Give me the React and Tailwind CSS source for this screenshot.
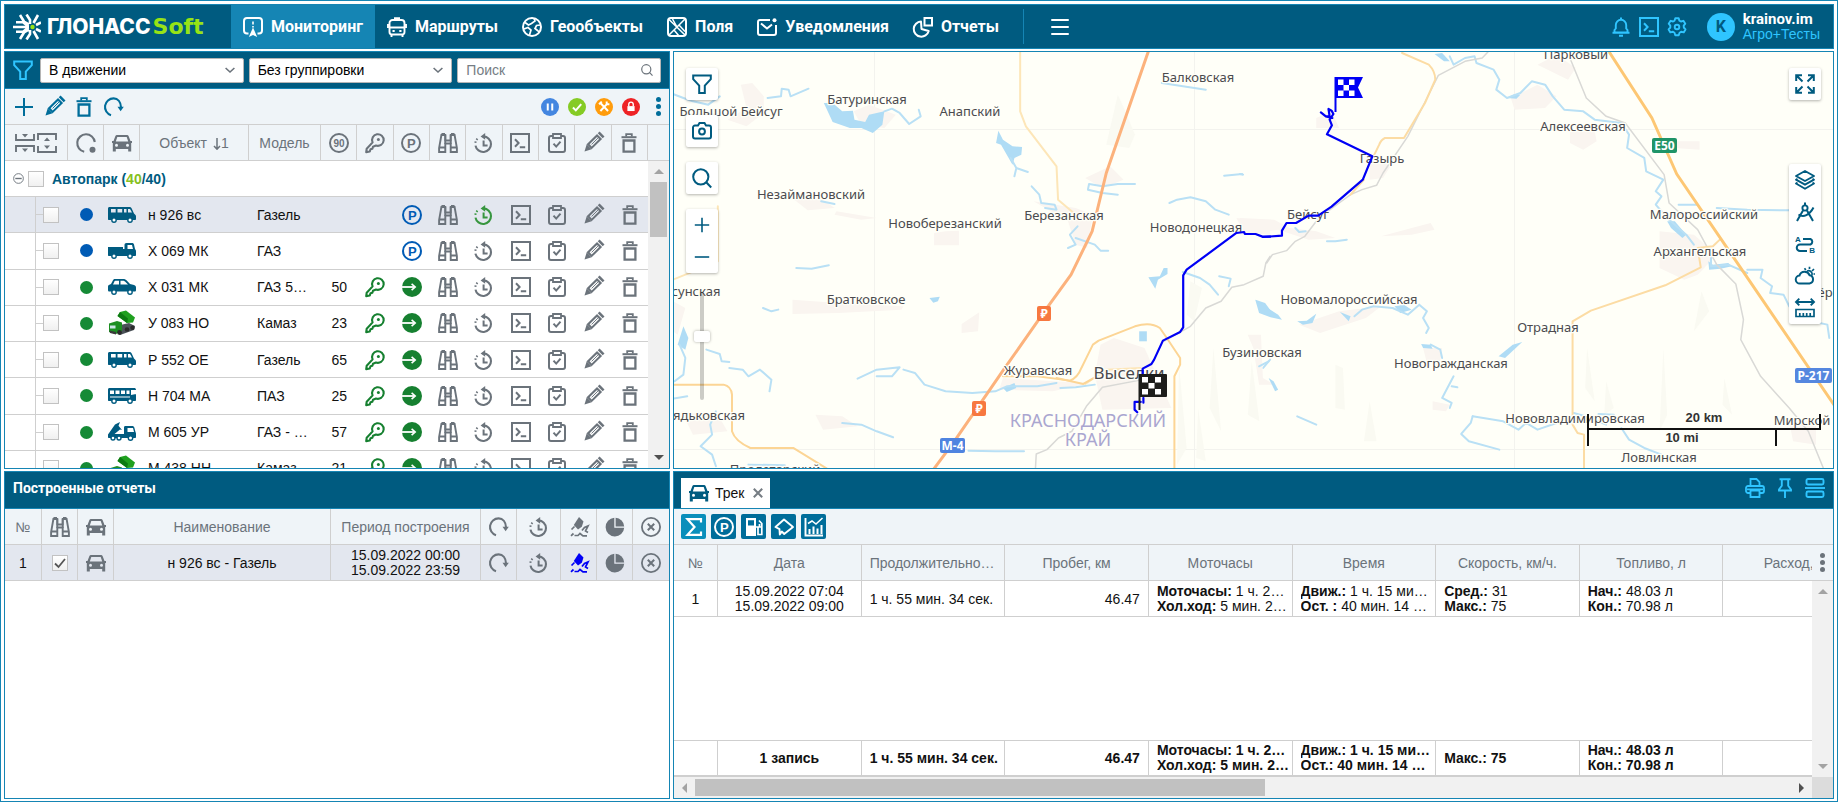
import React from 'react';

/* ---------- icons, all on a 20 x 20 grid ---------- */

const SHAPES = {
  filter: <path d="M1.2 1.5h17.6v3.6l-6 6.6V19H7.2v-7.3L1.2 5.1z" strokeWidth="2" />,
  plus: <path d="M10 1v18M1 10h18" strokeWidth="2" />,
  minus: <path d="M1 10h18" strokeWidth="2" />,
  pencil: (
    <g transform="rotate(45 10 10)">
      <path d="M7.5 1.8h5v12.6h-5z" strokeWidth="2.1" />
      <path d="M10 3v9" strokeWidth="0.9" />
      <path d="M6.5 15.4h7L10 22z" fill="currentColor" stroke="none" />
      <path d="M6.5 -2.8h7V-.2h-7z" fill="currentColor" stroke="none" />
    </g>
  ),
  trash: (
    <>
      <path d="M4.6 7.5h10.8v11.2H4.6z" strokeWidth="2.3" />
      <path d="M2.5 4.2h15" strokeWidth="2" />
      <path d="M7.2 3.6V1.2h5.6v2.4" strokeWidth="1.8" />
    </>
  ),
  redo: (
    <>
      <path d="M7 18.2A8.6 8.6 0 0 1 9.6 1.4c4.3 0 7.2 3.6 7.4 8.8" strokeWidth="2.1" />
      <path d="M13.500 9.800h6.300l-3.200 4.400z" fill="currentColor" stroke="none" />
    </>
  ),
  ring: (
    <>
      <path d="M8.2 18.7A8.8 8.8 0 1 1 18.8 9" strokeWidth="2.1" />
      <circle cx="16.5" cy="16.8" r="3" fill="currentColor" stroke="none" />
    </>
  ),
  car: (
    <path
      fillRule="evenodd"
      fill="currentColor"
      stroke="none"
      d="M5 2h10a2 2 0 0 1 1.700 1.200L18.500 8H20v2h-.8v8.500h-3V16H3.800v2.500h-3V10H0V8h1.500l1.800-4.800A2 2 0 0 1 5 2zm.3 2L3.800 8.500h12.400L14.700 4zM4.500 10.800a1.500 1.500 0 1 0 0 3 1.500 1.500 0 0 0 0-3zm11 0a1.500 1.500 0 1 0 0 3 1.500 1.500 0 0 0 0-3z"
    />
  ),
  speed: (
    <>
      <circle cx="10" cy="10" r="9" strokeWidth="2" />
      <text x="10" y="13.6" textAnchor="middle" fontSize="10" fontWeight="700" fontFamily="Liberation Sans, sans-serif" fill="currentColor" stroke="none">90</text>
    </>
  ),
  key: (
    <>
      <path d="M7.600 9.400A5.800 5.800 0 1 1 11 12.500l-3 1.300-.6 1.900-1.900.5-.7 2.300-3.600.6.5-3.400z" strokeWidth="2.1" strokeLinejoin="round" />
      <circle cx="13.400" cy="6.500" r="1.500" fill="currentColor" stroke="none" />
    </>
  ),
  parking: (
    <>
      <circle cx="10" cy="10" r="9" strokeWidth="2" />
      <text x="10.4" y="14.6" textAnchor="middle" fontSize="13" fontWeight="700" fontFamily="Liberation Sans, sans-serif" fill="currentColor" stroke="none">P</text>
    </>
  ),
  go: (
    <>
      <circle cx="10" cy="10" r="10" fill="currentColor" stroke="none" />
      <path d="M0 10h12" stroke="#fff" strokeWidth="1.800" />
      <path d="M9.600 6.800 13.200 10l-3.600 3.200" stroke="#fff" strokeWidth="1.600" />
    </>
  ),
  binoculars: (
    <>
      <path d="M3.4 2h3.9v5.500h5.400V2h3.900l2.300 13v4h-6.200v-8.500H7.300V19H1.100v-4z" strokeWidth="1.900" />
      <path d="M7.300 2v9M12.700 2v9M1 14.500h6.300M12.700 14.500H19M3.500 1h3.500M13 1h3.500" strokeWidth="1.800" />
    </>
  ),
  history: (
    <>
      <path d="M9.500 3.400a7.800 7.800 0 1 1-8 9.200" strokeWidth="2.100" />
      <path d="M11.200 0v6.800L6.600 3.400z" fill="currentColor" stroke="none" />
      <path d="M1.400 9.900l.2-1.500M2.500 6.800l.9-1.200" strokeWidth="2" />
      <path d="M9.600 7.500v5h4" strokeWidth="2" />
    </>
  ),
  terminal: (
    <>
      <path d="M1 1h18v18H1z" strokeWidth="2" />
      <path d="M5 6.200 8.600 10 5 13.800M9.800 14.200h5.400" strokeWidth="2" />
    </>
  ),
  clipboard: (
    <>
      <path d="M6 3H4a2 2 0 0 0-2 2v12a2 2 0 0 0 2 2h12a2 2 0 0 0 2-2V5a2 2 0 0 0-2-2h-2" strokeWidth="2" />
      <path d="M6 1h8v4H6z" strokeWidth="1.800" />
      <path d="m6.500 10.600 2.700 3 4.300-5" strokeWidth="2" />
    </>
  ),
  collapse: (
    <>
      <path d="M1 1v6h18V1M1 19v-6h18v6" strokeWidth="1.900" />
      <path d="M7 1h6l-3 3.500zM7 15.500h6L10 19z" fill="currentColor" stroke="none" />
    </>
  ),
  expand: (
    <>
      <path d="M1 7V1h18v6M1 13v6h18v-6" strokeWidth="1.900" />
      <path d="M7 8h6l-3-3.500zM7 12.500h6L10 16z" fill="currentColor" stroke="none" />
    </>
  ),
  brush: (
    <>
      <path d="m10 0 4.500 4.500-1.700 5.300L9 12.500 4.800 8z" fill="currentColor" stroke="none" />
      <path d="m5.500 9.500-3 3M4.500 16.500 2 18.800M5.500 18.500h3.500l2-2 3 2.300h4M13 13.500l2.500-3 3.500-1.500-2.500 5 2.500 1.500" strokeWidth="1.700" />
    </>
  ),
  pie: (
    <>
      <path d="M9.300.8a9.300 9.300 0 1 0 9.900 9.900H9.300z" fill="currentColor" stroke="none" />
      <path d="M10.600.8a9 9 0 0 1 8.600 8.600h-8.600z" fill="currentColor" stroke="none" />
    </>
  ),
  close: (
    <>
      <circle cx="10" cy="10" r="9.100" strokeWidth="1.800" />
      <path d="m6.800 6.800 6.400 6.400M13.200 6.800l-6.400 6.400" strokeWidth="2" />
    </>
  ),
  cross: <path d="m3 3 14 14M17 3 3 17" strokeWidth="3.400" />,
  monitoring: (
    <>
      <path d="M5.500 16.500H4a3 3 0 0 1-3-3V4a3 3 0 0 1 3-3h12a3 3 0 0 1 3 3v9.500a3 3 0 0 1-3 3h-1.500" strokeWidth="2" />
      <path d="M10 4.500v3M10 9v1.500" strokeWidth="1.600" />
      <path d="m10 10.500 4.200 9.500-4.200-2-4.200 2z" fill="currentColor" stroke="none" />
    </>
  ),
  bus: (
    <>
      <path d="M5.500 3h9a3 3 0 0 1 3 3v9a2.500 2.500 0 0 1-2.500 2.500H5A2.500 2.500 0 0 1 2.500 15V6a3 3 0 0 1 3-3z" strokeWidth="1.900" />
      <path d="M7 1.200h6M3 10.500h14M1 7v4M19 7v4M4.500 17.500V20M15.500 17.500V20" strokeWidth="1.900" />
      <path d="M5.500 13.900h2.200M12.300 13.900h2.200" strokeWidth="2" />
    </>
  ),
  globe: (
    <>
      <circle cx="10" cy="10" r="9" strokeWidth="2" />
      <path d="M3 5.500 6.500 8l3-1.500L13 4l-1-2.500M2 12l4-1.500 3 2.500-1.500 5M18.500 8l-4 .5-1.500 3 2.500 2 1.500 1.500" strokeWidth="1.700" />
    </>
  ),
  field: (
    <>
      <rect x="1" y="1" width="18" height="18" rx="3" strokeWidth="2" />
      <path d="M2 2.500 18 18M18 2 2 18M10 10l-4.500-8M7 13l5 6M12 8l6 6.500" strokeWidth="1.500" />
    </>
  ),
  mail: (
    <>
      <path d="M13 3H3a2 2 0 0 0-2 2v11a2 2 0 0 0 2 2h14a2 2 0 0 0 2-2V8" strokeWidth="2" />
      <path d="m4 6.500 6 5 5-4" strokeWidth="2" />
      <circle cx="17.500" cy="3.300" r="2" fill="currentColor" stroke="none" />
    </>
  ),
  report: (
    <>
      <path d="M8 4.500A7.600 7.600 0 1 0 15.700 14L8.500 12z" strokeWidth="2" strokeLinejoin="round" />
      <path d="M11.500 1H19v7.500h-7.500z" strokeWidth="2" />
    </>
  ),
  bell: (
    <>
      <path d="M3.500 15.500V13l1.300-1.500V8a5.200 5.200 0 0 1 10.400 0v3.500L16.500 13v2.500zM1.500 15.700h17" strokeWidth="1.900" />
      <path d="M10 .5v2M8 18.700h4" strokeWidth="2" />
    </>
  ),
  gear: (
    <>
      <path d="m8.300 1.200 3.400 0 .7 2.500 1.500.8 2.500-.7 1.900 2.900-1.600 2 .1 1.800 1.700 1.900-1.800 3-2.600-.6-1.500.9-.9 2.600H8.300l-.8-2.600-1.500-.9-2.600.6-1.800-3 1.700-1.900V8.700l-1.600-2 1.900-2.900 2.500.7 1.400-.8z" strokeWidth="1.900" strokeLinejoin="round" />
      <circle cx="10" cy="10" r="2.300" strokeWidth="1.900" />
    </>
  ),
  camera: (
    <>
      <path d="M3 4.500h3L7.500 2h5L14 4.500h3a2 2 0 0 1 2 2v9a2 2 0 0 1-2 2H3a2 2 0 0 1-2-2v-9a2 2 0 0 1 2-2z" strokeWidth="2" />
      <circle cx="10" cy="10.500" r="2.900" strokeWidth="2" />
    </>
  ),
  search: (
    <>
      <circle cx="8.800" cy="8.800" r="7.600" strokeWidth="2" />
      <path d="m14 14 5.200 5.500" strokeWidth="2" />
    </>
  ),
  fullscreen: (
    <path d="M1.200 7V1.200H7M13 1.200h5.800V7M18.800 13v5.800H13M7 18.800H1.200V13M2 2l5.500 5.500M18 2l-5.500 5.500M2 18l5.500-5.500M18 18l-5.500-5.500" strokeWidth="2" />
  ),
  layers: (
    <path d="m10 1 9 5-9 5-9-5zM2.500 8.800 1 9.700l9 5 9-5-1.500-.9M2.500 12.600 1 13.500l9 5.200 9-5.200-1.500-.9" strokeWidth="1.900" strokeLinejoin="round" />
  ),
  compass: (
    <>
      <path d="M10 .5v3M8 8.500 2 19M12 8.500 18 19M3.500 12.500c5 3.500 11 .5 15-7" strokeWidth="2" />
      <circle cx="10" cy="6" r="2.600" strokeWidth="1.900" />
    </>
  ),
  route: (
    <>
      <path d="M8 5h7.500a3 3 0 0 1 0 5.500H5A3.200 3.200 0 0 0 5 17h7" strokeWidth="2" />
      <text x="0" y="7.500" fontSize="8" fontWeight="700" fontFamily="Liberation Sans, sans-serif" fill="currentColor" stroke="none">A</text>
      <text x="14.200" y="18.600" fontSize="8" fontWeight="700" fontFamily="Liberation Sans, sans-serif" fill="currentColor" stroke="none">B</text>
    </>
  ),
  weather: (
    <>
      <path d="M5 17.500a4 4 0 0 1-.5-8 5.300 5.300 0 0 1 10-.3A4.200 4.200 0 0 1 14.500 17.500z" strokeWidth="2" />
      <path d="M12 5.200a3.500 3.500 0 0 1 5 4.200M14.500 3V.8M17 5l2-2M18.500 8h1.500M10.800 4 9.500 2.300" strokeWidth="1.700" />
    </>
  ),
  ruler: (
    <>
      <path d="M1 4h18M4.300.7 1 4l3.300 3.300M15.700.7 19 4l-3.300 3.300" strokeWidth="1.900" />
      <path d="M1 11.500h18v7H1zM4.800 18v-3M8.300 18v-3M11.700 18v-3M15.200 18v-3" strokeWidth="1.700" />
    </>
  ),
  printer: (
    <>
      <path d="M5.500 8V1h6L14.500 4v4M5.500 15H3a2 2 0 0 1-2-2v-3a2 2 0 0 1 2-2h14a2 2 0 0 1 2 2v3a2 2 0 0 1-2 2h-2.500" strokeWidth="1.800" />
      <path d="M5.500 12.500h9V19h-9zM2 11.300h16" strokeWidth="1.800" />
    </>
  ),
  pin: <path d="M4.500 1.200h11M6.800 1.500v6.300L4 11.500v1h12v-1l-2.800-3.700V1.500M10 12.500V20" strokeWidth="1.900" />,
  split: (
    <>
      <rect x="1.500" y="1" width="17" height="5.500" rx="1.500" strokeWidth="1.900" />
      <path d="M0 10h20" strokeWidth="1.900" />
      <rect x="1.500" y="13.500" width="17" height="5.500" rx="1.500" strokeWidth="1.900" />
    </>
  ),
  sum: <path d="M17 5.500V2.200H3.500L10.500 10l-7 7.800H17v-3.300" strokeWidth="2.200" />,
  fuel: (
    <>
      <path fillRule="evenodd" d="M2 1h10v18H2zm2 2.200v5.300h6V3.200z" fill="currentColor" stroke="none" />
      <path d="M12 10h2v7.500h3.800V6.500L15 3.500M15.500 7v3h2.300" strokeWidth="1.700" />
    </>
  ),
  hand: <path d="m5.800 17.500 2-3 2.400 2.500L19 10l-9-7.500L1.500 10l4 2.200z" strokeWidth="1.900" strokeLinejoin="round" />,
  chart: (
    <>
      <path d="M1.500 1v17.500H19" strokeWidth="1.900" />
      <path d="M5.500 17v-5M9.500 17V9.500M13.500 17v-5.500M17.500 17V8" strokeWidth="2" />
      <path d="m4 6.500 4-2.500 4 3L18.500 1" strokeWidth="1.500" />
    </>
  ),
  chevron: <path d="m4.500 7.500 5.500 5 5.500-5" strokeWidth="2" />,
};

function Icon({ name, className = 'size-5' }) {
  return (
    <svg viewBox="0 0 20 20" fill="none" stroke="currentColor" aria-hidden="true" className={`block shrink-0 overflow-visible ${className}`}>
      {SHAPES[name]}
    </svg>
  );
}

function IconButton({ name, label, className = '' }) {
  return (
    <button type="button" aria-label={label} className={`flex cursor-pointer items-center justify-center ${className}`}>
      <Icon name={name} />
    </button>
  );
}

/* ---------- vehicles, 28 x 16 ---------- */

const WHEELS = (
  <>
    <circle cx="6" cy="13" r="2.200" fill="#fff" stroke="currentColor" strokeWidth="1.400" />
    <circle cx="22" cy="13" r="2.200" fill="#fff" stroke="currentColor" strokeWidth="1.400" />
  </>
);

const VEHICLES = {
  van: (
    <>
      <path fillRule="evenodd" fill="currentColor" d="M1.500 0h19.500c1.500 0 2 .4 2.700 1.500L26 6.500l1.500 1.500c.4.400.5 1 .5 1.500V12c0 .7-.5 1-1 1H1c-.7 0-1-.400-1-1V1.500C0 .6.600 0 1.500 0zM3 2v3.500h4.700V2zm6.500 0v3.500h4.700V2zm6.500 0v3.500h2.500V2zm4 0v3.500h4L22 2z" />
      {WHEELS}
    </>
  ),
  pickup: (
    <>
      <path fillRule="evenodd" fill="currentColor" d="M0 4h15v2h1.500V2c0-1.300.7-2 2-2H24c1.200 0 1.700.5 2 1.500L27 6l.7 1c.3.500.3 1 .3 1.500V12c0 .7-.5 1-1 1H1c-.7 0-1-.400-1-1zM19.500 2v4H25l-1-4z" />
      {WHEELS}
    </>
  ),
  car: (
    <>
      <path fillRule="evenodd" fill="currentColor" d="M3 5 5 1.300C5.500.4 6 0 7 0h8c1.500 0 2.500.4 3.500 1.300L22 5l4 1c1.500.4 2 1.300 2 2.500V11c0 1-.5 1.500-1.500 1.500h-25C.5 12.500 0 12 0 11V7.500C0 6 1.500 5.500 3 5zm3-1.500L5 5.500h6V1.800H7.300C6.600 1.800 6.300 2.800 6 3.500zm6.500-1.700v3.700H20l-3-2.900c-.7-.6-1-.8-2-.8z" />
      {WHEELS}
    </>
  ),
  bus: (
    <>
      <path fillRule="evenodd" fill="currentColor" d="M1.500 0H26c1.300 0 2 .6 2 2v10c0 .7-.5 1-1 1H1c-.7 0-1-.400-1-1V1.500C0 .6.600 0 1.500 0zM2 2.500V6h4V2.500zm5.500 0V6h4V2.500zm5.500 0V6h4V2.500zm5.500 0V6h3V2.500zm4.500-.5V7l5-1V2zM2 8.500v1h20v-1z" />
      {WHEELS}
    </>
  ),
  crane: (
    <>
      <path fill="currentColor" d="M7 .5 12 -2l-1.500 3.800L14 6l-2-.5L6.500 10H16V3.500c0-1 .5-1.500 1.500-1.500H24c1.300 0 2 .5 2.300 1.500L27.500 8c.3.500.5 1 .5 1.500V13c0 .7-.5 1-1 1H1c-.7 0-1-.400-1-1v-2.500z" />
      <path fill="#fff" d="M19.500 4H25l1 4h-6.500z" />
      <circle cx="5" cy="14" r="2" fill="#fff" stroke="currentColor" strokeWidth="1.400" />
      <circle cx="11" cy="14" r="2" fill="#fff" stroke="currentColor" strokeWidth="1.400" />
      <circle cx="22.500" cy="14" r="2.200" fill="#fff" stroke="currentColor" strokeWidth="1.400" />
    </>
  ),
  dump: (
    <>
      <path d="M8 11 21 8l6 3-1 4-14 5z" fill="#4b5258" />
      <path d="M12 -3 18 -4.500 27 2.500 25 7.500 19 8 9.500 1z" fill="#1fa01f" />
      <path d="M9.500 1 12 -3l8 6.500L19 8z" fill="#0d7a12" />
      <path d="M1 8.500 9 6l5 1.500V16l-6 3-7-2z" fill="#1d8f22" />
      <path d="M2 10.500h5.500v3H2z" fill="#cfe6ea" />
      <path d="M1.500 15.500 8 17v2.500L2 18z" fill="#3a3a3a" />
      <circle cx="11.500" cy="17.500" r="2.400" fill="#2b2b2b" />
      <circle cx="19" cy="14.500" r="2.300" fill="#2b2b2b" />
      <circle cx="24.500" cy="12.800" r="2.200" fill="#2b2b2b" />
    </>
  ),
};

function Vehicle({ kind }) {
  return (
    <svg viewBox="0 0 28 16" aria-hidden="true" className="h-4 w-7 overflow-visible text-[#005b80]">
      {VEHICLES[kind]}
    </svg>
  );
}

/* ---------- header ---------- */

const NAV = [
  ['monitoring', 'Мониторинг'],
  ['bus', 'Маршруты'],
  ['globe', 'Геообъекты'],
  ['field', 'Поля'],
  ['mail', 'Уведомления'],
  ['report', 'Отчеты'],
];

function Logo() {
  return (
    <a href="#home" className="flex w-[226px] shrink-0 items-center gap-1.5 pl-2 text-white">
      <svg viewBox="0 0 28 26" className="h-[26px] w-7" fill="none" stroke="#fff" strokeWidth="2.600" aria-hidden="true">
        <path d="M0 13h16M3 8.300h7l5.500 4.200M3 17.700h7l5.500-4.200" />
        <path d="m7 1 4 6.500 5 3M7 25l4-6.500 5-3M13.500.5 17 6v4M13.500 25.500 17 20v-4M25 1l-4.500 8M25 25l-4.500-8M28 8.500 23 11M28 17.500 23 15" />
        <circle cx="19.500" cy="13" r="2.200" fill="#97e316" stroke="none" />
      </svg>
      <span className="flex items-baseline gap-0.5 text-[22px] leading-6 font-bold whitespace-nowrap">
        <span className="font-['Inter',sans-serif] text-[21px] font-extrabold">ГЛОНАСС</span>
        <span className="font-['DejaVu_Sans',sans-serif] text-[#97e316]">Soft</span>
      </span>
    </a>
  );
}

function TopBar() {
  return (
    <header className="flex h-[45px] shrink-0 border border-[#1585b4] bg-[#005b80] text-white">
      <Logo />
      <nav className="flex">
        {NAV.map(([icon, label], i) => (
          <a
            key={label}
            href={`#${icon}`}
            className={`flex items-center gap-2 px-3 font-['Roboto',sans-serif] text-base font-bold ${i === 0 ? 'bg-[#1585b4]' : ''}`}
          >
            <Icon name={icon} />
            {label}
          </a>
        ))}
      </nav>
      <div className="my-1 ml-3 w-px bg-[#1585b4]" />
      <button type="button" aria-label="Меню" className="ml-6 flex w-6 cursor-pointer flex-col items-center justify-center gap-[5px]">
        <span className="h-0.5 w-[18px] rounded bg-white" />
        <span className="h-0.5 w-[18px] rounded bg-white" />
        <span className="h-0.5 w-[18px] rounded bg-white" />
      </button>
      <div className="ml-auto flex items-center pr-[13px]">
        <div className="flex gap-2 text-[#2fc5ff]">
          <IconButton name="bell" label="Оповещения" />
          <IconButton name="terminal" label="Команды" />
          <IconButton name="gear" label="Настройки" />
        </div>
        <span className="ml-5 flex size-7 items-center justify-center rounded-full bg-[#2fc5ff] font-['Roboto',sans-serif] text-base font-bold text-[#005b80]">K</span>
        <div className="ml-2 leading-[15px]">
          <div className="font-['Roboto',sans-serif] text-[15px] leading-[15px] font-bold">krainov.im</div>
          <div className="text-[#2fc5ff]">Агро+Тесты</div>
        </div>
      </div>
    </header>
  );
}

/* ---------- object list ---------- */

const BOX = 'block size-4 appearance-none border border-[#c2c2c2] bg-linear-to-b from-white to-[#f0f0f0]';

function Picker({ label, value }) {
  return (
    <span className="relative flex-1">
      <select aria-label={label} className="h-[25px] w-full appearance-none rounded-xs border border-[#b5b5b5] bg-white px-2 text-black">
        <option>{value}</option>
      </select>
      <Icon name="chevron" className="pointer-events-none absolute top-1 right-1.5 size-4 text-[#6b737b]" />
    </span>
  );
}

const OBJECTS = [
  { name: 'н 926 вс', model: 'Газель', kind: 'van', parked: true, selected: true },
  { name: 'Х 069 МК', model: 'ГАЗ', kind: 'pickup', parked: true },
  { name: 'Х 031 МК', model: 'ГАЗ 53-12', kind: 'car', speed: 50 },
  { name: 'У 083 НО', model: 'Камаз', kind: 'dump', speed: 23 },
  { name: 'Р 552 ОЕ', model: 'Газель', kind: 'van', speed: 65 },
  { name: 'Н 704 МА', model: 'ПАЗ', kind: 'bus', speed: 25 },
  { name: 'М 605 УР', model: 'ГАЗ - 3309', kind: 'crane', speed: 57 },
  { name: 'М 438 НН', model: 'Камаз', kind: 'dump', speed: 21 },
];

const ACTIONS = [
  ['binoculars', 'Следить'],
  ['history', 'История'],
  ['terminal', 'Команды'],
  ['clipboard', 'Задания'],
  ['pencil', 'Изменить'],
  ['trash', 'Удалить'],
];

const HEAD = 'border-r border-b border-[#cfcfcf] p-0 font-normal text-[#6b737b]';
const CELL = 'border-b border-[#cfcfcf] p-0';

function HeadIcon({ name }) {
  return (
    <th className={HEAD}>
      <Icon name={name} className="mx-auto size-5" />
    </th>
  );
}

function ObjectRow({ item }) {
  return (
    <tr className={item.selected ? 'bg-[#e3e7ef]' : ''}>
      <td className={`${CELL} border-r`} />
      <td className={CELL}>
        <span className="flex items-center">
          <span className="h-px w-[7px] bg-[#cfcfcf]" />
          <input type="checkbox" aria-label={item.name} className={BOX} />
        </span>
      </td>
      <td className={CELL}>
        <span className={`mx-auto block size-[13px] rounded-full ${item.parked ? 'bg-[#005bb5]' : 'bg-[#158a36]'}`} />
      </td>
      <td className={CELL}>
        <span className="flex justify-center"><Vehicle kind={item.kind} /></span>
      </td>
      <td className={`${CELL} pl-2`}>{item.name}</td>
      <td className={`${CELL} truncate px-2`}>{item.model}</td>
      <td className={`${CELL} text-center`}>{item.speed}</td>
      <td className={`${CELL} text-[#168030]`}>{!item.parked && <Icon name="key" className="mx-auto size-5" />}</td>
      <td className={CELL}>
        {item.parked ? <Icon name="parking" className="mx-auto size-5 text-[#005bb5]" /> : <Icon name="go" className="mx-auto size-5 text-[#168030]" />}
      </td>
      {ACTIONS.map(([icon, label]) => (
        <td key={icon} className={CELL}>
          <IconButton name={icon} label={label} className={`w-full ${item.selected && icon === 'history' ? 'text-[#37963f]' : 'text-[#6b737b]'}`} />
        </td>
      ))}
    </tr>
  );
}

const BADGES = [
  ['Стоят', 'bg-[#4486e0]', 'M7.500 6v8M12.500 6v8'],
  ['На связи', 'bg-[#85cb24]', 'm5.500 10.500 3.200 3.200 6-7'],
  ['Обслуживание', 'bg-[#ff9c0c]', 'm6 14.500 8-8.500M6 5.500l8.500 9M4.500 7 7.500 4M13 4v3h3'],
  ['Заблокированы', 'bg-[#ee2326]', ''],
];

function ObjectsPanel() {
  return (
    <section className="flex min-h-0 min-w-0 flex-col overflow-hidden border border-[#1585b4] bg-white">
      <div className="flex h-[37px] shrink-0 items-center gap-[5px] border-b border-[#1585b4] bg-[#005b80] pr-2 pl-2">
        <button type="button" aria-label="Фильтр" className="mr-0.5 text-[#2fc5ff]"><Icon name="filter" /></button>
        <Picker label="Состояние" value="В движении" />
        <Picker label="Группировка" value="Без группировки" />
        <label className="relative flex-1">
          <span className="sr-only">Поиск</span>
          <input type="text" placeholder="Поиск" className="h-[25px] w-full rounded-xs border border-[#b5b5b5] bg-white px-2 placeholder:text-[#767d84]" />
          <Icon name="search" className="absolute top-1.5 right-2 size-3 text-[#6b737b]" />
        </label>
      </div>
      <div className="flex h-[35px] shrink-0 items-center bg-[#eff4f8] pr-1.5 pl-[9px] text-[#006d9a]">
        <div className="flex gap-2.5">
          <IconButton name="plus" label="Добавить" />
          <IconButton name="pencil" label="Изменить" />
          <IconButton name="trash" label="Удалить" />
          <IconButton name="redo" label="Обновить" />
        </div>
        <div className="ml-auto flex items-center gap-[9px]">
          {BADGES.map(([label, color, d]) => (
            <button key={label} type="button" aria-label={label} className={`size-[18px] rounded-full ${color}`}>
              <svg viewBox="0 0 20 20" fill="none" stroke="#fff" strokeWidth="2.200" aria-hidden="true">
                {d ? <path d={d} /> : (
                  <>
                    <path d="M6 9h8v5.500H6z" fill="#fff" stroke="none" />
                    <path d="M7.500 9V7a2.500 2.500 0 0 1 5 0v2" strokeWidth="1.500" />
                  </>
                )}
              </svg>
            </button>
          ))}
          <button type="button" aria-label="Ещё" className="ml-1 flex w-2.5 flex-col items-center gap-0.5">
            <span className="size-[5px] rounded-full bg-[#006d9a]" />
            <span className="size-[5px] rounded-full bg-[#006d9a]" />
            <span className="size-[5px] rounded-full bg-[#006d9a]" />
          </button>
        </div>
      </div>
      <div className="flex min-h-0 flex-1 overflow-hidden border-t border-[#cfcfcf]">
        <div className="min-w-0 flex-1 overflow-hidden">
          <table className="h-[362px] w-full table-fixed border-separate border-spacing-0">
            <colgroup>
              <col className="w-[31px]" />
              <col className="w-8" />
              <col className="w-9" />
              <col className="w-9" />
              <col className="w-[109px]" />
              <col className="w-[72px]" />
            </colgroup>
            <thead className="bg-[#eff4f8]">
              <tr className="h-9">
                <th colSpan={2} className={HEAD}>
                  <span className="flex justify-center gap-0.5">
                    <IconButton name="collapse" label="Свернуть" />
                    <IconButton name="expand" label="Развернуть" />
                  </span>
                </th>
                <HeadIcon name="ring" />
                <HeadIcon name="car" />
                <th className={HEAD}>
                  Объект{' '}
                  <svg viewBox="0 0 8 12" className="ml-0.5 inline h-3 w-2" fill="none" stroke="currentColor" strokeWidth="1.500" aria-hidden="true">
                    <path d="M4 0v11M1 8l3 3.200L7 8" />
                  </svg>
                  1
                </th>
                <th className={HEAD}>Модель</th>
                <HeadIcon name="speed" />
                <HeadIcon name="key" />
                <HeadIcon name="parking" />
                {ACTIONS.map(([icon]) => <HeadIcon key={icon} name={icon} />)}
              </tr>
            </thead>
            <tbody>
              <tr className="h-9">
                <td colSpan={15} className={CELL}>
                  <span className="flex items-center pl-2 font-bold text-[#005b80]">
                    <button type="button" aria-label="Свернуть группу" className="mr-1 text-[#6b737b]">
                      <svg viewBox="0 0 12 12" className="size-[11px]" fill="none" stroke="currentColor" aria-hidden="true">
                        <circle cx="6" cy="6" r="5.300" />
                        <path d="M2.500 6h7" strokeWidth="1.500" />
                      </svg>
                    </button>
                    <input type="checkbox" aria-label="Автопарк" className={BOX} />
                    <span className="ml-2">Автопарк (<span className="text-[#86c01e]">40</span>/40)</span>
                  </span>
                </td>
              </tr>
              {OBJECTS.map((item) => <ObjectRow key={item.name} item={item} />)}
            </tbody>
          </table>
        </div>
        <div className="flex w-[21px] shrink-0 flex-col">
          <div className="h-9 shrink-0 border-b border-[#cfcfcf] bg-[#eff4f8]" />
          <div className="flex flex-1 flex-col items-center bg-[#f1f1f1] py-2">
            <span className="border-x-[5px] border-b-[5px] border-x-transparent border-b-[#a3a3a3]" />
            <span className="mt-2 h-[55px] w-[17px] bg-[#c1c1c1]" />
            <span className="mt-auto border-x-[5px] border-t-[5px] border-x-transparent border-t-[#505050]" />
          </div>
        </div>
      </div>
    </section>
  );
}

/* ---------- reports ---------- */

const REPORT_ICONS = ['redo', 'history', 'brush', 'pie', 'close'];
const REPORT_LABELS = ['Перестроить', 'История', 'Трек', 'Диаграмма', 'Закрыть'];

function ReportsPanel() {
  const cell = 'border-r border-b border-[#cfcfcf] p-0 text-center last:border-r-0';
  return (
    <section className="min-h-0 min-w-0 overflow-hidden border border-[#1585b4] bg-white">
      <h2 className="flex h-[37px] items-center border-b border-[#1585b4] bg-[#005b80] px-2 pb-1 font-['Roboto',sans-serif] font-bold text-white">Построенные отчеты</h2>
      <table className="w-full table-fixed border-separate border-spacing-0">
        <colgroup>
          <col className="w-[37px]" />
          <col className="w-9" />
          <col className="w-9" />
          <col />
          <col className="w-[150px]" />
          <col className="w-9" />
          <col className="w-[44px]" />
          <col className="w-9" />
          <col className="w-9" />
          <col className="w-9" />
        </colgroup>
        <thead className="bg-[#eff4f8] text-[#6b737b]">
          <tr className="h-9">
            <th className={`${cell} font-normal`}>№</th>
            <th className={cell}><Icon name="binoculars" className="mx-auto size-5" /></th>
            <th className={cell}><Icon name="car" className="mx-auto size-5" /></th>
            <th className={`${cell} font-normal`}>Наименование</th>
            <th className={`${cell} font-normal`}>Период построения</th>
            {REPORT_ICONS.map((name) => <th key={name} className={cell}><Icon name={name} className="mx-auto size-5" /></th>)}
          </tr>
        </thead>
        <tbody className="bg-[#e3e7ef]">
          <tr className="h-9">
            <td className={cell}>1</td>
            <td className={cell}>
              <span className="relative mx-auto block size-4">
                <input type="checkbox" defaultChecked aria-label="н 926 вс - Газель" className={`${BOX} peer`} />
                <svg viewBox="0 0 16 16" className="pointer-events-none absolute inset-0 hidden peer-checked:block" fill="none" stroke="#555" strokeWidth="1.800" aria-hidden="true">
                  <path d="m3 8.500 3.500 3.500L13 4" />
                </svg>
              </span>
            </td>
            <td className={`${cell} text-[#6b737b]`}><Icon name="car" className="mx-auto size-5" /></td>
            <td className={cell}>н 926 вс - Газель</td>
            <td className={`${cell} leading-[15px]`}>15.09.2022 00:00<br />15.09.2022 23:59</td>
            {REPORT_ICONS.map((name, i) => (
              <td key={name} className={cell}>
                <IconButton name={name} label={REPORT_LABELS[i]} className={`w-full ${name === 'brush' ? 'text-[#0000f5]' : 'text-[#6b737b]'}`} />
              </td>
            ))}
          </tr>
        </tbody>
      </table>
    </section>
  );
}

/* ---------- track table ---------- */

function Pair({ rows, total }) {
  return rows.map(([label, value]) => (
    <div key={label} className={`truncate leading-[15px] ${total ? 'font-bold' : ''}`}>
      <b>{label}</b> {value}
    </div>
  ));
}

const TOOLS = [['sum', 'Итоги'], ['parking', 'Стоянки'], ['fuel', 'Топливо'], ['hand', 'Геозоны'], ['chart', 'График']];
const COLUMNS = ['Дата', 'Продолжительность', 'Пробег, км', 'Моточасы', 'Время', 'Скорость, км/ч.', 'Топливо, л', 'Расход, л'];

function TrackColumns() {
  return (
    <colgroup>
      <col className="w-[44px]" />
      {COLUMNS.map((c) => <col key={c} />)}
    </colgroup>
  );
}

function TrackPanel() {
  const base = 'border-r border-b border-[#cfcfcf] py-0';
  const cell = `${base} px-2`;
  const wide = `${base} pl-2 pr-0.5 whitespace-nowrap`;
  const grid = 'w-[1193px] table-fixed border-separate border-spacing-0';
  return (
    <section className="flex min-h-0 min-w-0 flex-col overflow-hidden border border-[#1585b4] bg-white">
      <div className="flex h-[37px] shrink-0 items-end border-b border-[#1585b4] bg-[#005b80] pr-2 pl-[7px]">
        <div className="flex h-[30px] items-center bg-white pr-1.5 pl-2">
          <Icon name="car" className="size-5 text-[#005b80]" />
          <span className="mr-2 ml-1.5">Трек</span>
          <button type="button" aria-label="Закрыть вкладку" className="text-[#767d84]"><Icon name="cross" className="size-3" /></button>
        </div>
        <div className="ml-auto flex gap-2.5 self-center pb-1 text-[#2fc5ff]">
          <IconButton name="printer" label="Печать" />
          <IconButton name="pin" label="Закрепить" />
          <IconButton name="split" label="Разделить" />
        </div>
      </div>
      <div className="flex h-[35px] shrink-0 items-center gap-[5px] bg-[#eff4f8] pl-[7px] text-white">
        {TOOLS.map(([icon, label], i) => (
          <IconButton key={icon} name={icon} label={label} className={`size-[25px] rounded-xs ${i === 0 ? 'bg-[#0a8fbb]' : 'bg-[#006d9a]'}`} />
        ))}
      </div>
      <div className="flex min-h-0 flex-1 border-t border-[#cfcfcf]">
        <div className="flex min-w-0 flex-1 flex-col">
          <div className="min-h-0 flex-1 overflow-hidden">
            <table className={grid}>
              <TrackColumns />
              <thead className="bg-[#eff4f8] text-[#6b737b]">
                <tr className="h-9">
                  <th className={`${cell} font-normal`}>№</th>
                  {COLUMNS.map((c) => <th key={c} className={`${cell} truncate font-normal`}>{c}</th>)}
                </tr>
              </thead>
              <tbody>
                <tr className="h-9">
                  <td className={`${cell} text-center`}>1</td>
                  <td className={`${cell} text-center leading-[15px]`}>15.09.2022 07:04<br />15.09.2022 09:00</td>
                  <td className={wide}>1 ч. 55 мин. 34 сек.</td>
                  <td className={`${cell} text-right`}>46.47</td>
                  <td className={wide}><Pair rows={[['Моточасы:', '1 ч. 21 мин.'], ['Хол.ход:', '5 мин. 25 сек.']]} /></td>
                  <td className={wide}><Pair rows={[['Движ.:', '1 ч. 15 мин. 20 сек.'], ['Ост. :', '40 мин. 14 сек.']]} /></td>
                  <td className={wide}><Pair rows={[['Сред.:', '31'], ['Макс.:', '75']]} /></td>
                  <td className={wide}><Pair rows={[['Нач.:', '48.03 л'], ['Кон.:', '70.98 л']]} /></td>
                  <td className={cell} />
                </tr>
              </tbody>
            </table>
          </div>
          <div className="shrink-0 overflow-hidden border-y border-[#cfcfcf]">
            <table className={grid}>
              <TrackColumns />
              <tbody className="font-bold">
                <tr className="h-[35px]">
                  <td className={cell} />
                  <td className={`${cell} text-center`}>1 запись</td>
                  <td className={wide}>1 ч. 55 мин. 34 сек.</td>
                  <td className={`${cell} text-right`}>46.47</td>
                  <td className={wide}><Pair total rows={[['Моточасы:', '1 ч. 21 мин.'], ['Хол.ход:', '5 мин. 25 сек.']]} /></td>
                  <td className={wide}><Pair total rows={[['Движ.:', '1 ч. 15 мин. 20 сек.'], ['Ост.:', '40 мин. 14 сек.']]} /></td>
                  <td className={wide}>Макс.: 75</td>
                  <td className={wide}><Pair total rows={[['Нач.:', '48.03 л'], ['Кон.:', '70.98 л']]} /></td>
                  <td className={cell} />
                </tr>
              </tbody>
            </table>
          </div>
          <div className="flex h-[21px] shrink-0 items-center bg-[#f1f1f1] px-2">
            <span className="border-y-[5px] border-r-[5px] border-y-transparent border-r-[#a3a3a3]" />
            <div className="mx-2 flex-1"><div className="h-[17px] w-[52%] bg-[#c1c1c1]" /></div>
            <span className="border-y-[5px] border-l-[5px] border-y-transparent border-l-[#505050]" />
          </div>
        </div>
        <div className="flex w-[21px] shrink-0 flex-col">
          <button type="button" aria-label="Столбцы" className="flex h-9 shrink-0 flex-col items-center justify-center gap-0.5 border-b border-[#cfcfcf] bg-[#eff4f8]">
            <span className="size-[5px] rounded-full bg-[#6b737b]" />
            <span className="size-[5px] rounded-full bg-[#6b737b]" />
            <span className="size-[5px] rounded-full bg-[#6b737b]" />
          </button>
          <div className="flex flex-1 flex-col items-center justify-between bg-[#f1f1f1] py-2">
            <span className="border-x-[5px] border-b-[5px] border-x-transparent border-b-[#a3a3a3]" />
            <span className="border-x-[5px] border-t-[5px] border-x-transparent border-t-[#a3a3a3]" />
          </div>
          <div className="h-[21px] shrink-0 bg-[#dcdcdc]" />
        </div>
      </div>
    </section>
  );
}

/* ---------- map ---------- */

const PLACES = [
  [57, 64, 'Большой Бейсуг'], [193, 52, 'Батуринская'], [296, 64, 'Анапский'], [524, 30, 'Балковская'],
  [137, 147, 'Незаймановский'], [271, 176, 'Новоберезанский'], [390, 168, 'Березанская'], [522, 180, 'Новодонецкая'],
  [22, 244, 'сунская'], [192, 252, 'Братковское'], [364, 323, 'Журавская'], [35, 368, 'ядьковская'],
  [101, 422, 'Пролетарский'], [902, 7, 'Парковый'], [909, 79, 'Алексеевская'], [708, 111, 'Газырь'],
  [634, 167, 'Бейсуг'], [1030, 167, 'Малороссийский'], [1026, 204, 'Архангельская'], [675, 252, 'Новомалороссийская'],
  [874, 280, 'Отрадная'], [588, 305, 'Бузиновская'], [777, 316, 'Новогражданская'], [901, 371, 'Нововладимировская'],
  [1128, 373, 'Мирской'], [985, 410, 'Ловлинская'], [1165, 245, 'ёрская'],
];

const WEST_LAND = [
  'M185 110 215 105 245 145 245 195 200 235 150 215 200 180z',
  'M480 190 520 170 590 200 560 240 500 230z',
  'M325 455 400 455 430 480 360 487z',
  'M435 490 540 510 500 515 430 500z',
  'M690 555 720 550 755 548 755 592 690 592z',
  'M320 755 440 765 610 775 605 785 440 795 320 798z',
  'M762 828 808 793 805 850 762 855z',
  'M1085 390 1150 355 1185 395 1130 420z',
  'M950 460 1060 480 1105 500 1090 600 1060 590 1040 520z',
  'M1125 890 1160 870 1240 900 1310 1080 1130 1085 1110 980z',
  'M380 1100 450 1105 490 1135 400 1145z',
  'M8 760 40 780 20 860 8 850z',
  'M30 1090 130 1110 150 1150 60 1160z',
  'M870 990 1000 1000 1100 1005 1000 1030 860 1025z',
  'M1480 510 1568 520 1568 560 1500 552z',
];

const WEST_TINT = [
  'M1170 140 1190 190 1215 260 1200 300 1140 290z',
  'M1360 700 1390 720 1370 820 1350 800z',
  'M1330 950 1350 1200 1325 1250zM1380 1080 1400 1240 1375 1230zM1420 900 1440 1150 1410 1080zM1520 940 1540 1120 1510 1100z',
];

const EAST_LAND = [
  'M780 50 830 20 880 60 860 95z',
  'M710 150 780 110 830 145 800 180 720 185z',
  'M200 210 240 190 260 240 200 240z',
  'M340 340 400 345 375 390 340 395z',
  'M0 510 90 515 130 540 200 550 250 570 180 575 100 545 0 560z',
  'M370 565 450 540 500 525 510 545 450 560z',
  'M865 250 930 250 935 280 900 305 865 285z',
  'M1100 550 1190 560 1250 620 1200 680 1165 695 1100 660z',
  'M155 830 260 790 370 775 330 810 210 855z',
  'M480 900 530 900 525 940 490 945z',
  'M505 1060 550 1070 540 1090 505 1085z',
  'M20 860 55 860 60 990 90 1010 50 1010 35 900z',
  'M1440 1120 1510 1130 1510 1190 1450 1180z',
  'M1140 280 1205 280 1205 305 1140 300z',
];

const EAST_TINT = [
  'M250 950 270 960 275 1085 250 1080zM340 1060 358 1180 325 1180z',
  'M910 900 930 1060 905 1020zM960 1000 980 1080 955 1100zM1110 900 1120 1100 1100 1150zM1210 730 1230 790 1190 850z',
  'M1270 990 1290 1100 1265 1070z',
];

const WEST_LAKES = [
  'M402 165 425 165 450 190 478 188 482 215 510 222 520 200 560 190 555 230 530 255 500 240 470 240 425 222 412 190z',
  'M858 248 870 275 895 295 920 297 918 320 900 330 895 350 880 320 865 290 852 285z',
  'M1250 688 1280 685 1290 660 1300 660 1300 678 1275 695 1268 722z',
  'M1226 850 1246 850 1246 880 1226 880z',
  'M678 750 705 746 700 760 688 764z',
  'M1530 755 1555 765 1568 785 1568 800 1545 785z',
  'M35 835 48 870 40 905 20 890z',
  'M870 1020 900 1005 905 1020 880 1032z',
];

const EAST_LAKES = [
  'M40 755 65 775 100 800 110 815 80 808 50 795z',
  'M150 820 175 818 200 797 190 825 165 830z',
  'M262 792 290 805 285 820z',
  'M405 775 430 770 450 785 420 795z',
  'M510 18 530 15 550 40 535 40z',
  'M475 888 500 890 505 902 480 900z',
  'M1120 520 1140 520 1170 560 1160 570 1130 540z',
  'M735 140 725 152 700 150 720 138z',
  'M678 925 715 890 740 882 695 930z',
  'M75 990 88 1000 100 1025 92 1030z',
  'M1228 640 1240 650 1280 645 1290 655 1260 662 1230 665z',
];

const WEST_RIVERS = [
  'M8 138 35 150 60 160 100 170 130 145',
  'M255 150 290 145 292 122 310 125 315 145 362 122',
  'M560 190 580 182 600 195 625 228 655 205 650 185',
  'M890 330 905 360 935 372M905 360 900 385',
  'M945 415 965 440 970 465 1005 470 1010 485 980 480',
  'M1065 535 1045 560 1060 590 1040 600M1060 570 1110 590 1125 608 1145 608',
  'M1215 408 1170 408 1130 415 1095 408 1092 425 1130 435 1170 440',
  'M1305 465 1325 455 1360 448 1400 460 1425 485 1460 500',
  'M1448 383 1495 378', 'M1285 105 1400 125',
  'M330 660 370 662 415 652', 'M243 780 265 790 283 785', 'M395 460 430 468',
  'M1340 672 1385 690 1410 710 1432 740M1435 685 1465 692 1460 715',
  'M95 905 130 918 135 940 155 942', 'M155 960 190 965 205 985 235 965 265 995 260 1030',
  'M490 992 540 965 600 958 580 985 540 985',
  'M610 965 640 975 665 1010 720 1030 790 1035 850 1030 880 1015 960 1015 1010 1005',
  'M1020 1020 1060 1018 1110 1010', 'M450 1125 500 1130 540 1150 583 1168',
  'M780 1208 850 1210 925 1210', 'M25 890 40 930 35 980 12 1000M8 1052 45 1045',
  'M120 1090 105 1130 110 1160 80 1195 110 1220 120 1255',
  'M1550 960 1568 935', 'M205 1250 300 1252',
];

const EAST_RIVERS = [
  'M550 25 560 50 590 30 615 25 620 45 665 65 680 95 672 125 700 150 735 135 765 100 800 110 820 145 850 185 900 190 930 215 1000 225',
  'M1000 225 1020 260 1015 300 1060 330 1065 370 1110 395 1090 430 1105 445 1090 470 1120 510 1170 560 1190 590',
  'M1150 470 1200 470M1250 480 1330 485 1440 487', 'M1330 665 1370 665 1365 690 1395 715 1390 735 1425 740 1440 775 1520 825 1540 830 1545 870',
  'M1235 625 1235 655 1280 650 1330 675', 'M300 805 320 785 350 775 400 780 440 800 470 770 490 790 480 810 495 840 488 855',
  'M500 890 525 905 530 930', 'M560 985 530 1050 555 1065 550 1080M555 1015 570 1018',
  'M150 1105 200 1130', 'M610 1105 690 1120 730 1145 750 1125 780 1145 830 1125',
  'M610 1105 605 1125 580 1158 600 1180 680 1205', 'M875 1095 905 1105 960 1130M980 1100 940 1098',
  'M1000 1140 1020 1175 1060 1200 1105 1220', 'M145 540 155 552 172 550M228 580 250 580 280 575M0 378 8 380', 'M50 955 75 940',
];

function Lines({ list, ...rest }) {
  return (
    <g fill="none" strokeLinejoin="round" strokeLinecap="round" {...rest}>
      {list.map((d) => <path key={d} d={d} vectorEffect="non-scaling-stroke" />)}
    </g>
  );
}

function Areas({ list, fill }) {
  return <g fill={fill}>{list.map((d) => <path key={d} d={d} />)}</g>;
}

const WEST = 'translate(-4 -4) scale(.3827 .3333)';
const EAST = 'translate(566 -4) scale(.3814 .3333)';

function Shield({ x, y, w, fill, children }) {
  return (
    <g>
      <rect x={x} y={y} width={w} height="15" rx="2" fill={fill} />
      <text x={x + w / 2} y={y + 12} textAnchor="middle" fontSize="12" fontWeight="700" fill="#fff">{children}</text>
    </g>
  );
}

function MapDrawing() {
  return (
    <svg
      viewBox="0 0 1159 416"
      preserveAspectRatio="xMidYMid slice"
      role="img"
      aria-label="Карта с треком"
      className="absolute inset-0 h-full w-full font-['Noto_Sans',sans-serif]"
    >
      <rect width="1159" height="416" fill="#fffff8" />
      <path d="M200.500 0v416M520.500 0v416M840.500 0v416M0 77.500h1159M0 397.500h1159" stroke="#f3f3ee" />
      <g transform={WEST}>
        <Areas list={WEST_LAND} fill="#faf5f0" />
        <Areas list={WEST_TINT} fill="#fafaf2" />
        <Areas list={WEST_LAKES} fill="#afdcf5" />
        <Lines list={WEST_RIVERS} stroke="#b9e0f5" strokeWidth="2" />
        <Lines stroke="#d9d9d6" strokeWidth="1.500" list={['M955 1260 957 1218 985 1205 1015 1170 1050 1150 1088 1075 1130 1018 1235 995', 'M1290 880 1360 835 1400 780 1440 760 1468 718 1500 710 1550 685 1557 645 1568 625']} />
        <Lines stroke="#fde6b8" strokeWidth="2" list={['M915 12V190L930 235 1010 355 1014 455 1055 495', 'M125 475V640L8 695', 'M1085 1008 1140 965 1230 960']} />
        <Lines stroke="#fcd595" strokeWidth="2" list={['M8 1010H140Q160 1015 162 1040V1150Q170 1180 210 1200H322L410 1262', 'M870 985 960 985 1045 998Q1065 990 1075 960L1105 890 1120 878 1215 835Q1255 820 1280 840L1295 865 1333 930V950L1318 985V1262', 'M1010 990 1080 1008 1115 985']} />
        <Lines stroke="#fcb27c" strokeWidth="3" list={['M1250 10 1140 375 1103 550 1048 680 985 780 875 960 740 1185 690 1262']} />
      </g>
      <g transform={EAST}>
        <Areas list={EAST_LAND} fill="#faf5f0" />
        <Areas list={EAST_TINT} fill="#fafaf2" />
        <Areas list={EAST_LAKES} fill="#afdcf5" />
        <Lines list={EAST_RIVERS} stroke="#b9e0f5" strokeWidth="2" />
        <Lines stroke="#d9d9d6" strokeWidth="1.500" list={['M70 645 85 620 122 608 145 580 170 565 200 520 230 490 260 465 290 440 320 425 358 412 375 375 440 265 520 82 590 40 635 30 650 12', 'M865 30 908 150 960 205 1010 225 1112 380 1125 465 1200 545 1250 650 1300 708 1320 815 1313 875 1365 985 1440 1080 1490 1150 1530 1262']} />
        <Lines stroke="#fcdca4" strokeWidth="2" list={['M425 15 495 50Q512 70 512 95L485 165 430 270H380Q370 275 365 290L350 325M325 395 290 440', 'M1258 575 1240 595 1200 600 1208 658 1115 712 920 788 872 820V1130L885 1155 902 1160V1262']} />
        <Lines stroke="#fdc774" strokeWidth="3" list={['M968 12 1080 210 1145 378 1560 1075']} />
      </g>

      <g fontSize="13" textAnchor="middle" fill="#4b4b4f" stroke="#fffff8" strokeWidth="2.500" strokeLinejoin="round" paintOrder="stroke">
        {PLACES.map(([x, y, name]) => <text key={name} x={x} y={y}>{name}</text>)}
        <text x="455" y="327" fontSize="17">Выселки</text>
        <g fill="#aaa6d0" fontSize="18">
          <text x="414" y="375">КРАСНОДАРСКИЙ</text>
          <text x="414" y="394">КРАЙ</text>
        </g>
      </g>

      <Shield x={363} y={254} w={14} fill="#f77840">₽</Shield>
      <Shield x={298} y={349} w={14} fill="#f77840">₽</Shield>
      <Shield x={266} y={386} w={25} fill="#4f84e0">М-4</Shield>
      <Shield x={978} y={86} w={25} fill="#1f9468">E50</Shield>
      <Shield x={1121} y={316} w={37} fill="#5587df">Р-217</Shield>

      <g transform={WEST}>
        <Lines stroke="#0000f5" strokeWidth="2.200" list={['M1235 980V962L1258 948 1265 935 1288 878 1333 852 1341 838V682L1350 665 1480 555 1500 552 1502 558 1530 558 1548 566 1568 566', 'M1237 1050V1064M1230 1062H1214V1085L1221 1093']} />
      </g>
      <g transform={EAST}>
        <Lines stroke="#0000f5" strokeWidth="2.200" list={['M60 567 110 563V548L122 525H147L180 503H205L240 476 322 395 347 325 228 259 241 232 235 215 245 198 240 188 232 183 235 205 225 205 212 193M225 205 242 210']} />
      </g>

      <path d="M661.500 25h27.500l-5 10.500 5 10.500h-27.500z" fill="#0000f5" />
      <path d="M661.500 25v35" stroke="#0000f5" strokeWidth="2" />
      <path d="M664 27.500h5.500v5.500h-5.500zM675 27.500h5.500v5.500h-5.500zM669.500 33h5.500v5.500h-5.500zM664 38.500h5.500v5.500h-5.500zM675 38.500h5.500v5.500h-5.500z" fill="#fff" />

      <rect x="465" y="322" width="28" height="23" rx="1" fill="#1d1d1b" />
      <path d="M465.500 322v36" stroke="#1d1d1b" strokeWidth="2" />
      <path d="M468 325h6v5.500h-6zM481 325h6v5.500h-6zM474.500 331h6v5.500h-6zM468 337h6v5.500h-6zM481 337h6v5.500h-6z" fill="#fff" />
    </svg>
  );
}

function MapPanel() {
  const box = 'flex w-8 flex-col items-center rounded-xs bg-white text-[#005b80] shadow-[0_1px_3px_rgba(0,0,0,0.3)]';
  return (
    <section className="relative min-h-0 min-w-0 overflow-hidden border border-[#1585b4] bg-[#fffff8]">
      <MapDrawing />
      <div className="absolute top-4 left-3 flex w-8 flex-col items-center gap-[15px]">
        <div className={box}><IconButton name="filter" label="Фильтр" className="size-8" /></div>
        <div className={box}><IconButton name="camera" label="Снимок" className="size-8" /></div>
        <div className={box}><IconButton name="search" label="Поиск на карте" className="size-8" /></div>
        <div className={box}>
          <button type="button" aria-label="Приблизить" className="flex size-8 items-center justify-center"><Icon name="plus" className="size-4" /></button>
          <button type="button" aria-label="Отдалить" className="flex size-8 items-center justify-center"><Icon name="minus" className="size-4" /></button>
        </div>
        <div className="relative mt-1 h-[108px] w-4">
          <div className="mx-auto h-full w-1 rounded bg-black/20" />
          <input
            type="range"
            aria-label="Масштаб"
            defaultValue="60"
            className="absolute inset-0 m-0 h-full w-full cursor-pointer appearance-none bg-transparent [writing-mode:vertical-lr] [direction:rtl] [&::-webkit-slider-thumb]:h-[11px] [&::-webkit-slider-thumb]:w-4 [&::-webkit-slider-thumb]:appearance-none [&::-webkit-slider-thumb]:rounded-xs [&::-webkit-slider-thumb]:bg-white [&::-webkit-slider-thumb]:shadow-[0_0_3px_rgba(0,0,0,0.35)]"
          />
        </div>
      </div>
      <div className="absolute top-4 right-3 flex flex-col gap-16">
        <div className={box}><IconButton name="fullscreen" label="На весь экран" className="size-8" /></div>
        <div className={box}>
          <IconButton name="layers" label="Слои" className="size-8" />
          <IconButton name="compass" label="Рисование" className="size-8" />
          <IconButton name="route" label="Маршрут" className="size-8" />
          <IconButton name="weather" label="Погода" className="size-8" />
          <IconButton name="ruler" label="Линейка" className="size-8" />
        </div>
      </div>
      <div className="absolute right-3 bottom-[22px] w-[234px] text-center text-[13px] leading-4 font-bold text-[#333]">
        <div className="h-4 border-x-2 border-b-2 border-[#111] leading-2">20 km</div>
        <div className="h-4 w-[190px] border-x-2 border-[#111]">10 mi</div>
      </div>
    </section>
  );
}

export default function App() {
  return (
    <div className="flex h-screen flex-col gap-0.5 border border-[#1585b4] bg-white px-[3px] pt-[3px] pb-0.5 font-['Liberation_Sans',Arial,sans-serif] text-sm text-[#111]">
      <TopBar />
      <main className="grid min-h-0 flex-1 grid-cols-[666fr_1161fr] grid-rows-[418fr_328fr] gap-x-[3px] gap-y-0.5">
        <ObjectsPanel />
        <MapPanel />
        <ReportsPanel />
        <TrackPanel />
      </main>
    </div>
  );
}
